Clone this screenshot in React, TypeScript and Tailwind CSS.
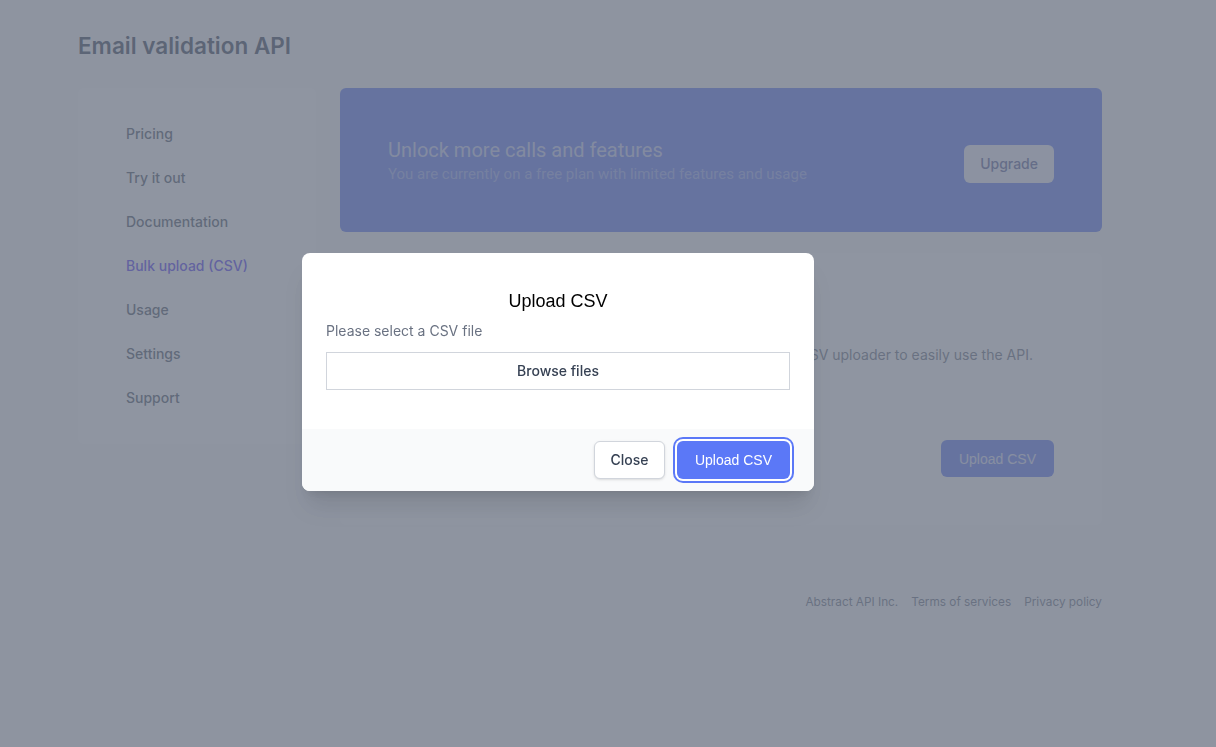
const navItems = ['Pricing', 'Try it out', 'Documentation', 'Bulk upload (CSV)', 'Usage', 'Settings', 'Support'];

export default function App() {
  return (
    <div className="min-h-[747px] bg-[#fbfbfc] font-['Inter',sans-serif]">
      <div className="ml-[78px] w-[1024px] pt-[30px]">
        <h1 className="text-[22.5px] font-semibold leading-[32px] text-gray-700">Email validation API</h1>

        <div className="mt-[26px] flex items-start gap-6">
          {/* Sidebar */}
          <nav className="w-[238px] rounded-md bg-white py-6 pl-[48px]">
            {navItems.map((item) => (
              <div
                key={item}
                className={
                  'py-3 text-sm font-medium leading-5 ' +
                  (item === 'Bulk upload (CSV)' ? 'text-indigo-600' : 'text-gray-600')
                }
              >
                {item}
              </div>
            ))}
          </nav>

          {/* Main */}
          <div className="flex flex-1 flex-col gap-[21px]">
            <div className="flex h-[144px] items-center justify-between rounded-md bg-[#5b78f7] px-12">
              <div className="font-['Roboto',sans-serif]">
                <div className="text-[20px] leading-7 text-white/70">Unlock more calls and features</div>
                <div className="text-[15px] leading-5 text-white/40">You are currently on a free plan with limited features and usage</div>
              </div>
              <button className="mt-2 h-[38px] rounded-md bg-[#f1f3fd] px-4 text-sm font-medium text-[#59619a]">Upgrade</button>
            </div>

            <div className="rounded-md bg-white p-12">
              <h2 className="text-lg font-medium leading-7 text-gray-900">Bulk upload (CSV)</h2>
              <p className="mt-[16px] whitespace-nowrap text-sm leading-5 text-gray-500">
                Validate hundreds of emails without writing any code, use our CSV uploader to easily use the API.
              </p>
              <div className="mt-[75px] flex justify-end">
                <button className="h-[37px] w-[113px] rounded-md bg-[#5b78f7] font-['Liberation_Sans',sans-serif] text-sm text-white/80">
                  Upload CSV
                </button>
              </div>
            </div>
          </div>
        </div>

        <div className="mt-[69px] flex justify-end gap-[13px] text-[11.8px] leading-4 text-gray-500">
          <span>Abstract API Inc.</span>
          <span>Terms of services</span>
          <span>Privacy policy</span>
        </div>
      </div>

      {/* Overlay */}
      <div className="fixed inset-0 bg-gray-500/75" />

      {/* Modal */}
      <div className="fixed left-[302px] top-[253px] w-[512px] overflow-hidden rounded-lg bg-white shadow-xl">
        <div className="px-6 pb-[39px] pt-[34px]">
          <h3 className="text-center font-['Liberation_Sans',sans-serif] text-lg font-medium leading-7 text-black">Upload CSV</h3>
          <p className="mt-[6px] text-sm leading-5 text-gray-500">Please select a CSV file</p>
          <button className="mt-[11px] flex h-[38px] w-full items-center justify-center border border-gray-300 bg-white text-sm font-medium text-gray-700">
            Browse files
          </button>
        </div>
        <div className="flex justify-end gap-3 bg-gray-50 px-6 py-3">
          <button className="h-[38px] w-[71px] rounded-md border border-gray-300 bg-white text-sm font-medium text-gray-700 shadow-sm">
            Close
          </button>
          <button className="h-[38px] w-[113px] rounded-md bg-[#5b78f7] font-['Liberation_Sans',sans-serif] text-sm text-white ring-2 ring-[#5b78f7] ring-offset-2">
            Upload CSV
          </button>
        </div>
      </div>
    </div>
  );
}
